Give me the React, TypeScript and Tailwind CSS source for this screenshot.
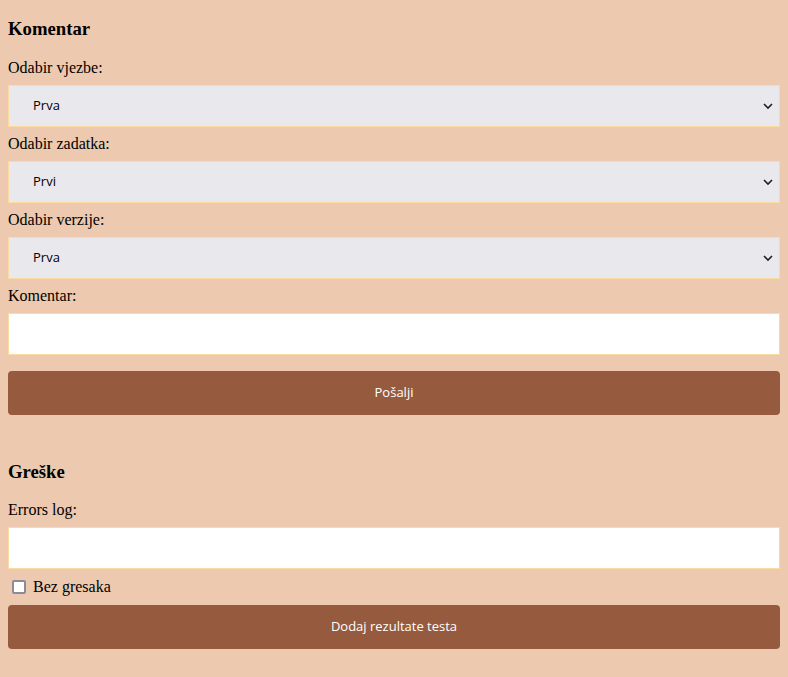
import { useState } from 'react';

const selects = [
  { label: 'Odabir vjezbe:', value: 'Prva', options: ['Prva', 'Druga', 'Treca'] },
  { label: 'Odabir zadatka:', value: 'Prvi', options: ['Prvi', 'Drugi', 'Treci'] },
  { label: 'Odabir verzije:', value: 'Prva', options: ['Prva', 'Druga'] },
];

function Chevron() {
  return (
    <svg
      className="pointer-events-none absolute right-[7px] top-1/2 -translate-y-1/2"
      width="10"
      height="7"
      viewBox="0 0 10 7"
      fill="none"
    >
      <path d="M1 1.5 L5 5.5 L9 1.5" stroke="#1f1f1f" strokeWidth="1.6" />
    </svg>
  );
}

export default function App() {
  const [checked, setChecked] = useState(false);

  return (
    <div className="min-h-[677px] bg-[#edc9af] px-2 pt-[18px] pb-7 font-['Liberation_Serif',serif] text-black">
      <h3 className="text-[18.72px] font-bold leading-[22px]">Komentar</h3>

      <div className="mt-[19px]">
        {selects.map((s) => (
          <div key={s.label}>
            <label className="block text-base leading-[18px]">{s.label}</label>
            <div className="relative my-2">
              <select
                defaultValue={s.value}
                className="block h-[42px] w-full appearance-none border border-[#fcdba3] bg-[#e9e8ed] pl-6 font-['Open_Sans',sans-serif] text-[13px] text-black outline-none"
              >
                {s.options.map((o) => (
                  <option key={o}>{o}</option>
                ))}
              </select>
              <Chevron />
            </div>
          </div>
        ))}

        <label className="block text-base leading-[18px]">Komentar:</label>
        <input
          type="text"
          className="mt-2 block h-[42px] w-full border border-[#fcdba3] bg-white outline-none"
        />
        <button className="mt-4 flex h-11 w-full items-center justify-center rounded-[4px] bg-[#965a3e] font-['Open_Sans',sans-serif] text-[13px] text-white">
          Pošalji
        </button>
      </div>

      <h3 className="mt-[46px] text-[18.72px] font-bold leading-[22px]">Greške</h3>

      <div className="mt-[18px]">
        <label className="block text-base leading-[18px]">Errors log:</label>
        <input
          type="text"
          className="mt-2 block h-[42px] w-full border border-[#fcdba3] bg-white outline-none"
        />
        <label className="mt-[8px] flex h-[20px] items-center text-base leading-[18px]">
          <span
            onClick={() => setChecked(!checked)}
            className={`ml-1 mr-[7px] block h-[14px] w-[14px] rounded-[2px] border-2 border-[#8b8b99] ${
              checked ? 'bg-[#965a3e]' : 'bg-white'
            }`}
          />
          Bez gresaka
        </label>
        <button className="mt-[8px] flex h-11 w-full items-center justify-center rounded-[4px] bg-[#965a3e] font-['Open_Sans',sans-serif] text-[13px] text-white">
          Dodaj rezultate testa
        </button>
      </div>
    </div>
  );
}
